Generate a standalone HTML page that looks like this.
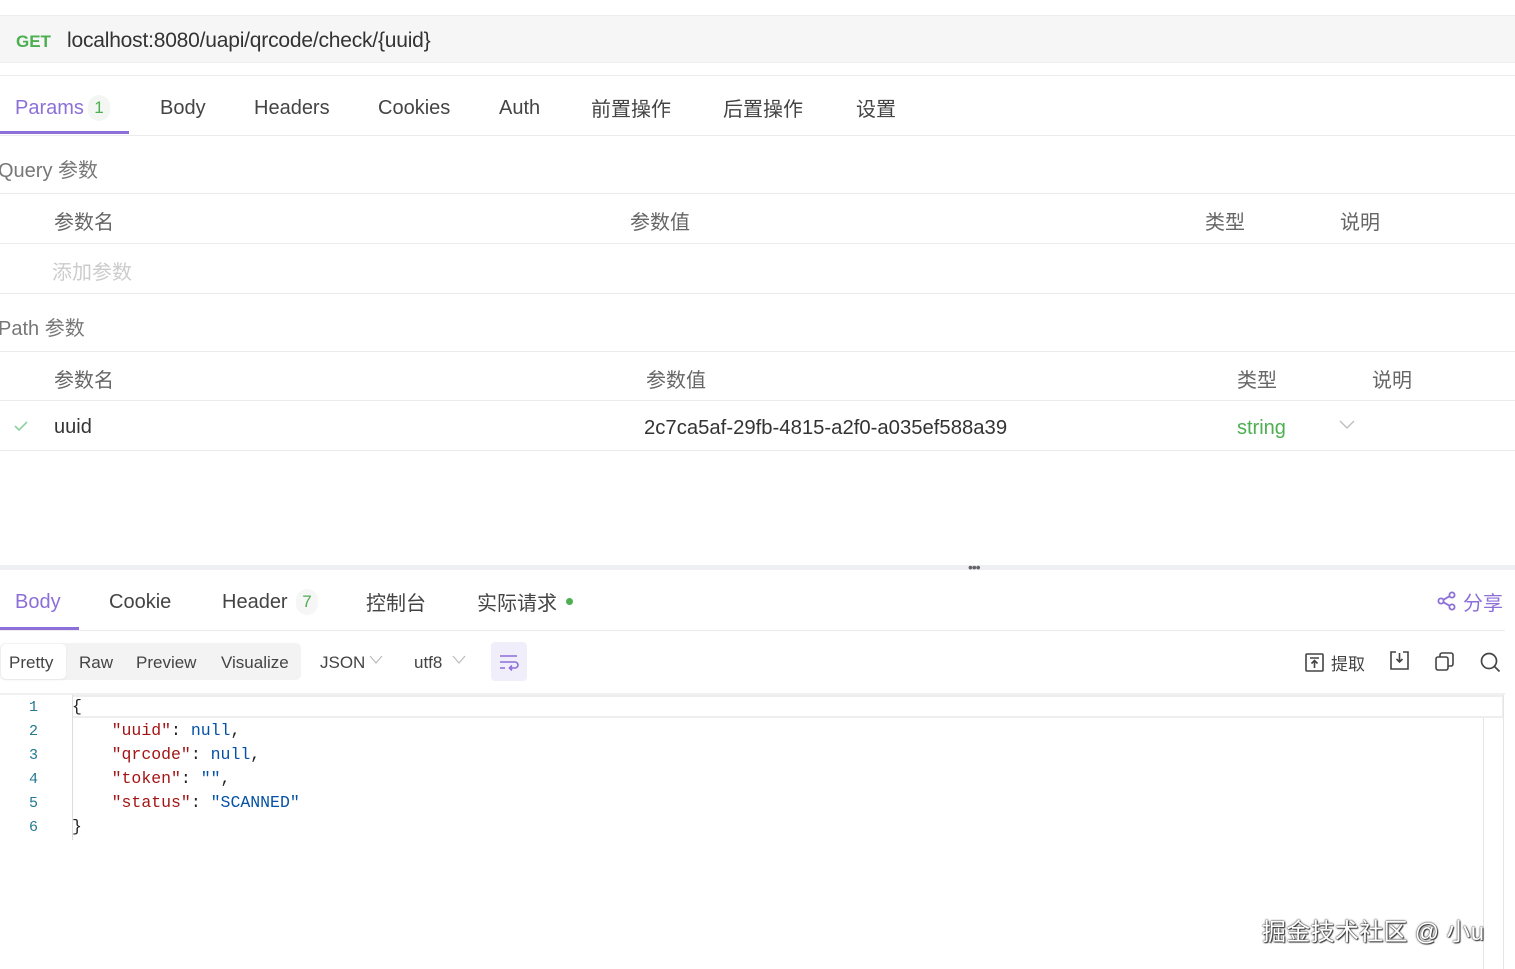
<!DOCTYPE html>
<html><head><meta charset="utf-8"><style>
*{margin:0;padding:0;box-sizing:border-box}
body{width:1515px;height:969px;background:#fff;font-family:"Liberation Sans","Noto Sans CJK SC",sans-serif;color:#333;position:relative;overflow:hidden}
.a{position:absolute;white-space:nowrap}
.line{position:absolute;left:0;right:0;height:1px;background:#ececec}
.t{font-size:20px;color:#444}
.h{font-size:19px;color:#666}
.code{font-family:"Liberation Mono","DejaVu Sans Mono",monospace;font-size:16.5px}
.k{color:#a31515}.n{color:#0451a5}.s{color:#0451a5}
.ln{font-family:"Liberation Mono",monospace;font-size:15px;color:#237893}
</style></head><body>
<div class="a" style="left:0;top:15px;width:1515px;height:48px;background:#f6f6f6;border-top:1px solid #eee;border-bottom:1px solid #eee"></div>
<div class="a" style="left:16px;top:32px;font-size:17px;font-weight:bold;color:#4caf50">GET</div>
<div class="a" style="left:67px;top:29px;font-size:21px;color:#333;letter-spacing:-0.2px">localhost:8080/uapi/qrcode/check/{uuid}</div>
<div class="line" style="top:75px"></div>
<div class="a t" style="left:15px;top:97px;color:#8c6fd8">Params</div>
<div class="a" style="left:88px;top:95px;width:22px;height:26px;border-radius:11px;background:#f3f6f3;color:#4caf50;font-size:17px;text-align:center;line-height:26px">1</div>
<div class="a" style="left:0;top:131px;width:129px;height:3px;background:#8c6fd8"></div>
<div class="a t" style="left:160px;top:97px">Body</div>
<div class="a t" style="left:254px;top:97px">Headers</div>
<div class="a t" style="left:378px;top:97px">Cookies</div>
<div class="a t" style="left:499px;top:97px">Auth</div>
<div class="a t" style="left:591px;top:93px">前置操作</div>
<div class="a t" style="left:723px;top:93px">后置操作</div>
<div class="a t" style="left:856px;top:93px">设置</div>
<div class="line" style="top:135px"></div>
<div class="a h" style="left:-2px;top:154px;color:#777;font-size:20px">Query 参数</div>
<div class="line" style="top:193px"></div>
<div class="a h" style="left:54px;top:206px;font-size:20px">参数名</div>
<div class="a h" style="left:630px;top:206px;font-size:20px">参数值</div>
<div class="a h" style="left:1205px;top:206px;font-size:20px">类型</div>
<div class="a h" style="left:1340px;top:206px;font-size:20px">说明</div>
<div class="line" style="top:243px"></div>
<div class="a h" style="left:52px;top:256px;color:#ccc;font-size:20px">添加参数</div>
<div class="line" style="top:293px"></div>
<div class="a h" style="left:-2px;top:312px;color:#777;font-size:20px">Path 参数</div>
<div class="line" style="top:351px"></div>
<div class="a h" style="left:54px;top:364px;font-size:20px">参数名</div>
<div class="a h" style="left:646px;top:364px;font-size:20px">参数值</div>
<div class="a h" style="left:1237px;top:364px;font-size:20px">类型</div>
<div class="a h" style="left:1372px;top:364px;font-size:20px">说明</div>
<div class="line" style="top:400px"></div>
<svg class="a" style="left:13px;top:419px" width="16" height="14"><path d="M2 7l4 4 8-8" stroke="#8fd19e" stroke-width="1.6" fill="none"/></svg>
<div class="a t" style="left:54px;top:416px;color:#333">uuid</div>
<div class="a t" style="left:644px;top:417px;color:#333;font-size:20.3px">2c7ca5af-29fb-4815-a2f0-a035ef588a39</div>
<div class="a t" style="left:1237px;top:417px;color:#4caf50">string</div>
<svg class="a" style="left:1339px;top:419px" width="16" height="12"><path d="M1 2l7 7 7-7" stroke="#bbb" stroke-width="1.3" fill="none"/></svg>
<div class="line" style="top:450px"></div>
<div class="a" style="left:0;top:565px;width:1515px;height:5px;background:#eeeff2"></div>
<div class="a" style="left:968px;top:559px;font-size:14px;color:#666;letter-spacing:-1px">•••</div>
<div class="a t" style="left:15px;top:591px;color:#8c6fd8">Body</div>
<div class="a" style="left:0;top:627px;width:79px;height:3px;background:#8c6fd8"></div>
<div class="a t" style="left:109px;top:591px">Cookie</div>
<div class="a t" style="left:222px;top:591px">Header</div>
<div class="a" style="left:296px;top:589px;width:22px;height:26px;border-radius:11px;background:#f5f6f5;color:#4caf50;font-size:17px;text-align:center;line-height:26px">7</div>
<div class="a t" style="left:366px;top:587px">控制台</div>
<div class="a t" style="left:477px;top:587px">实际请求</div>
<div class="a" style="left:566px;top:598px;width:7px;height:7px;border-radius:50%;background:#4caf50"></div>
<svg class="a" style="left:1437px;top:591px" width="20" height="20"><g stroke="#8c6fd8" stroke-width="1.8" fill="none"><circle cx="15" cy="4" r="2.6"/><circle cx="4" cy="10" r="2.6"/><circle cx="15" cy="16" r="2.6"/><path d="M6.3 8.8l6.4-3.6M6.3 11.2l6.4 3.6"/></g></svg>
<div class="a t" style="left:1463px;top:587px;color:#8c6fd8">分享</div>
<div class="line" style="top:630px;right:10px"></div>
<div class="a" style="left:0;top:643px;width:301px;height:37px;background:#f3f3f3;border-radius:5px"></div>
<div class="a" style="left:1px;top:644px;width:65px;height:35px;background:#fff;border-radius:5px;box-shadow:0 1px 2px rgba(0,0,0,.06)"></div>
<div class="a" style="left:9px;top:653px;font-size:17px;color:#444">Pretty</div>
<div class="a" style="left:79px;top:653px;font-size:17px;color:#444">Raw</div>
<div class="a" style="left:136px;top:653px;font-size:17px;color:#444">Preview</div>
<div class="a" style="left:221px;top:653px;font-size:17px;color:#444">Visualize</div>
<div class="a" style="left:320px;top:653px;font-size:17px;color:#444">JSON</div>
<svg class="a" style="left:369px;top:655px" width="14" height="10"><path d="M1 1l6 7 6-7" stroke="#bbb" stroke-width="1.2" fill="none"/></svg>
<div class="a" style="left:414px;top:653px;font-size:17px;color:#444">utf8</div>
<svg class="a" style="left:452px;top:655px" width="14" height="10"><path d="M1 1l6 7 6-7" stroke="#bbb" stroke-width="1.2" fill="none"/></svg>
<div class="a" style="left:491px;top:642px;width:36px;height:39px;background:#f1eefb;border-radius:4px"></div>
<svg class="a" style="left:499px;top:653px" width="20" height="18"><g stroke="#8c6fd8" stroke-width="1.6" fill="none"><path d="M1 3h17M1 9h15a3 3 0 010 6h-5M13 12.5l-2.5 2.5 2.5 2.5M1 15h5"/></g></svg>
<svg class="a" style="left:1305px;top:653px" width="20" height="20"><g stroke="#444" stroke-width="1.6" fill="none"><rect x="1" y="1" width="17" height="17" rx="1"/><path d="M5 5h9M9.5 15V8M6.5 10.5l3-3 3 3"/></g></svg>
<div class="a" style="left:1331px;top:650px;font-size:17px;color:#444">提取</div>
<svg class="a" style="left:1390px;top:651px" width="20" height="20"><g stroke="#444" stroke-width="1.6" fill="none"><path d="M6 1H1v17h17V1h-5M9.5 2v9M6.5 8l3 3 3-3"/></g></svg>
<svg class="a" style="left:1435px;top:652px" width="20" height="20"><g stroke="#444" stroke-width="1.6" fill="none"><rect x="1" y="5" width="12" height="13" rx="2"/><path d="M5 5V3a2 2 0 012-2h9a2 2 0 012 2v9a2 2 0 01-2 2h-3"/></g></svg>
<svg class="a" style="left:1480px;top:652px" width="22" height="22"><g stroke="#444" stroke-width="1.7" fill="none"><circle cx="9" cy="9" r="7.5"/><path d="M14.5 14.5l5 5"/></g></svg>
<div class="a" style="left:0;top:693px;width:1505px;height:2px;background:#f0f0f0"></div>
<div class="a" style="left:72px;top:695px;width:1432px;height:23px;border:2px solid #eee;border-left:none"></div>
<div class="a" style="left:72px;top:695px;width:1px;height:145px;background:#ddd"></div>
<div class="a" style="left:1483px;top:718px;width:1px;height:251px;background:#e5e5e5"></div>
<div class="a" style="left:1503px;top:695px;width:1px;height:274px;background:#e5e5e5"></div>
<div class="a ln" style="left:29px;top:696px;line-height:24px">1<br>2<br>3<br>4<br>5<br>6</div>
<div class="a code" style="left:72px;top:695px;line-height:24px;color:#222;white-space:pre">{
    <span class="k">"uuid"</span>: <span class="n">null</span>,
    <span class="k">"qrcode"</span>: <span class="n">null</span>,
    <span class="k">"token"</span>: <span class="s">""</span>,
    <span class="k">"status"</span>: <span class="s">"SCANNED"</span>
}</div>
<div class="a" style="left:1262px;top:912px;font-size:24px;color:#fff;letter-spacing:0.3px;text-shadow:0 0 2px #333,0 0 1px #333,1px 1px 1px #333">掘金技术社区 @ 小u</div>
</body></html>
